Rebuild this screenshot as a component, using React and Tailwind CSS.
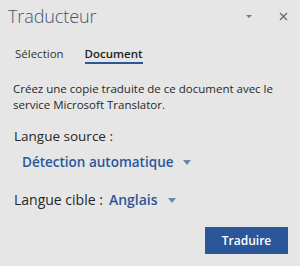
import React from "react";

export default function App() {
  const font = { fontFamily: '"Segoe UI", "Open Sans", "Noto Sans", sans-serif' };
  return (
    <div className="w-[300px] h-[266px] bg-[#e6e6e6] text-[#262626] overflow-hidden" style={font}>
      <div className="flex items-start justify-between pl-[8px] pr-[12px] pt-[3px] h-[34px]">
        <div className="text-[18px] font-light leading-[26px] text-[#44546f] tracking-[-0.1px]">Traducteur</div>
        <div className="flex items-center gap-[26px] pt-[9px]">
          <svg width="8" height="5" viewBox="0 0 8 5"><path d="M1 1 L4 4 L7 1 Z" fill="#7a7a7a" /></svg>
          <svg width="9" height="9" viewBox="0 0 9 9"><path d="M1 1 L8 8 M8 1 L1 8" stroke="#6a6a6a" strokeWidth="1.4" /></svg>
        </div>
      </div>
      <div className="flex gap-[21px] pl-[15px] mt-[11px] text-[11.5px] leading-[18px]">
        <div className="text-[#333]">Sélection</div>
        <div className="font-semibold text-[#222] border-b-2 border-[#2b579a] leading-[17px]">Document</div>
      </div>
      <div className="pl-[13px] pr-[10px] mt-[17px] text-[11.5px] leading-[16px] text-[#262626]">
        Créez une copie traduite de ce document avec le service Microsoft Translator.
      </div>
      <div className="pl-[14px] mt-[12px] text-[13.5px] leading-[22px] text-[#262626]">Langue source :</div>
      <div className="pl-[22px] mt-[4px] flex items-center gap-[10px] text-[13.5px] leading-[22px] font-semibold text-[#2b579a]">
        <span>Détection automatique</span>
        <svg width="8" height="5" viewBox="0 0 8 5"><path d="M0 0 L8 0 L4 5 Z" fill="#6e84aa" /></svg>
      </div>
      <div className="pl-[14px] mt-[16px] flex items-center text-[14px] leading-[22px]">
        <span className="text-[#262626]">Langue cible :</span>
        <span className="ml-[6px] font-semibold text-[#2b579a]">Anglais</span>
        <svg className="ml-[10px]" width="8" height="5" viewBox="0 0 8 5"><path d="M0 0 L8 0 L4 5 Z" fill="#6e84aa" /></svg>
      </div>
      <div className="flex justify-end pr-[12px] mt-[16px]">
        <button className="w-[83px] h-[27px] bg-[#2b579a] text-white text-[12px] font-semibold">Traduire</button>
      </div>
    </div>
  );
}
